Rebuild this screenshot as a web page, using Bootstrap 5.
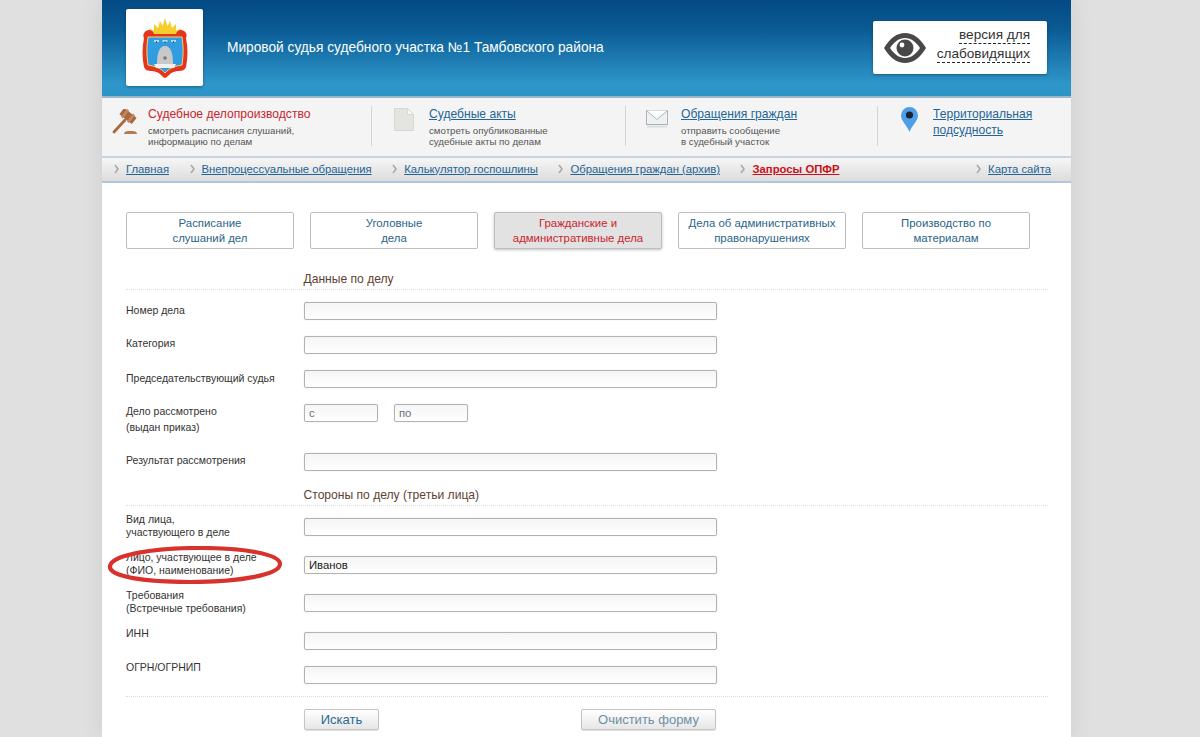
<!DOCTYPE html>
<html lang="ru">
<head>
<meta charset="utf-8">
<title>Мировой судья</title>
<link href="https://cdn.jsdelivr.net/npm/bootstrap@5.3.0/dist/css/bootstrap.min.css" rel="stylesheet">
<style>
html,body{height:737px;overflow:hidden}
body{background:#e0e0e0;font-family:"Liberation Sans",Arial,sans-serif;color:#333}
.shell{width:969px;margin-left:102px;height:737px;background:#fff;box-shadow:0 0 22px rgba(0,0,0,.09)}
.top-band{height:98px;background:linear-gradient(#034a84 0,#0a5a94 30%,#2e97c9 88%,#2c93c6 100%);border-bottom:2px solid #9db7c9;padding:9px 24px 0}
.crest-box{width:77px;height:77px;background:#fff;border-radius:2px;box-shadow:0 1px 3px rgba(0,0,0,.35);flex:none}
.site-title{color:#fff;font-size:13.72px;margin-left:24px;margin-top:-9px}
.eye-box{width:174px;height:53px;background:#fff;border-radius:2px;box-shadow:0 1px 3px rgba(0,0,0,.35);margin-top:12px;padding:0 17px 0 11px;color:#333;font-size:13.6px;line-height:19px}
.eye-txt{padding-bottom:8px}
.eye-txt span{border-bottom:1px dashed #222;display:inline-block;line-height:17px}
.service-strip{height:58px;background:#f4f4f4}
.svc{height:58px;padding-top:8px;position:relative}
.svc::after{content:"";position:absolute;right:0;top:8px;height:40px;width:1px;background:#d4d4d4}
.svc:last-child::after{display:none}
.svc1{width:270px}.svc2{width:254px}.svc3{width:252px}.svc4{width:193px}
.svc-ico{flex:none;height:40px;padding-top:1px}
.svc1 .svc-ico{width:46px;padding-left:9px;padding-top:3px}
.svc2 .svc-ico{width:57px;padding-left:22px}
.svc3 .svc-ico{width:55px;padding-left:20px}
.svc4 .svc-ico{width:55px;padding-left:23px}
.svc-head{font-size:12.1px;line-height:16px;color:#1f6597;text-decoration:underline}
.svc-head.now{color:#c4262e;text-decoration:none}
.svc-sub{font-size:9.7px;line-height:11px;color:#555;margin-top:3px}
.crumbs{height:27px;background:linear-gradient(#f6f6f6,#dcdcdc);border-top:2px solid #c6d4e1;border-bottom:2px solid #b4c7d8;padding:0 20px 1px 12px;font-size:11.3px}
.crumb-item{display:inline-flex;align-items:center}
.crumb-item+.crumb-item{margin-left:20.500px}
.crumb-item.push{margin-left:auto}
.crumb-item svg{margin-right:7px}
.crumb-item span{color:#1f6597;text-decoration:underline}
.crumb-item span.hot{color:#c9101a;font-weight:700}
.tab-row{padding:29px 0 0 24px;gap:16px}
.case-tab{width:168px;height:37px;border:1px solid #bdbdbd;border-radius:2px;font-size:11.4px;line-height:15px;color:#2a6488;text-align:center;padding-top:3px;background:#fff}
.case-tab.sel{background:#e2e2e2;color:#c9252d;box-shadow:0 1px 3px rgba(0,0,0,.25)}
.sheet{padding:0 23px 0 24px;margin-top:23px;position:relative}
.sec-head{padding-left:177.500px;font-size:12.1px;color:#5c4232;line-height:14px;padding-bottom:3px;border-bottom:1px dotted #ddd;margin-bottom:12px}
.fld{display:flex;font-size:10.5px;line-height:19px;color:#333}
.fld-label{width:178px;flex:none;margin-top:-1px}
.fld-label.up1{margin-top:-2px}
.fld-label.lh16{line-height:16px;margin-top:-1px}
.fld-label.tight{line-height:13px;margin-top:-5px}
.fld-input{width:413px;height:18px;border:1px solid #b2b2b2;border-radius:2px;background:linear-gradient(#f5f5f5,#fff);font-size:11.3px;padding:0 4px;min-height:0;box-shadow:0 0 1px rgba(0,0,0,.25);color:#222}
.fld-input.short{width:74px;color:#555}
.fld-input.short::placeholder{color:#6a6f75;opacity:1}
.pair{gap:16px}
.act-row{border-top:1px dotted #ddd;padding:12px 0 0 178px;gap:202px}
.act-btn{height:21px;border:1px solid #c4c4c4;border-radius:2px;background:linear-gradient(#fff,#e6e6e6);font-size:13px;line-height:19px;padding:0;color:#2a6a94;box-shadow:0 1px 1px rgba(0,0,0,.12)}
.act-search{width:75px}
.act-clear{width:135px;color:#6f8fa3}
.mark-ring{position:absolute;left:-19px;top:-10px;pointer-events:none}
.rel-row{position:relative}
.h30{height:30px}.h34{height:34px}.h35{height:35px}.h38{height:38px}.h49{height:49px}
</style>
</head>
<body>
<div class="shell">
  <div class="top-band d-flex align-items-start">
    <div class="crest-box d-flex align-items-center justify-content-center">
      <svg width="46" height="62" viewBox="0 0 46 62">
        <path d="M9 19L7 11l5 3V7l4 4 2-7 2.500 5L23 1l2.500 8L28 4l2 7 4-4v7l5-3-2 8z" fill="#f6cd2c"/>
        <path d="M4 14c3-2 7-1 8 3h22c1-4 5-5 8-3 3 2 3 5 2 7 2 10 2 20 0 29-1 3-4 4-7 4-4 0-7 1-10 4-2 2-3 3-4 3s-2-1-4-3c-3-3-6-4-10-4-3 0-6-1-7-4-2-9-2-19 0-29-1-2-1-5 2-7z" fill="#e5351f"/>
        <path d="M6 20h34c1.500 9 1.500 18 0 28-6 1-13 3-17 8-4-5-11-7-17-8-1.500-10-1.500-19 0-28z" fill="#2f9de0" stroke="#f5d66a"/>
        <path d="M15 47c0-10 2-18 8-18s8 8 8 18z" fill="#c8c8c8"/>
        <path d="M12 47h22l-2 4H14z" fill="#f0f0f0"/>
        <circle cx="23" cy="41" r="1.800" fill="#777"/>
        <path d="M12 24h5M20.500 24h5M29 24h5" stroke="#e6edf2" stroke-width="1.500"/>
        <path d="M14.500 24v2M23 24v2M31.500 24v2" stroke="#555" stroke-width="1"/>
      </svg>
    </div>
    <div class="site-title align-self-center">Мировой судья судебного участка №1 Тамбовского района</div>
    <div class="eye-box ms-auto d-flex align-items-center justify-content-between">
      <svg width="42" height="30" viewBox="0 0 42 30">
        <path d="M0 15C6 5 13 0 21 0s15 5 21 15c-6 10-13 15-21 15S6 25 0 15z" fill="#484848"/>
        <path d="M6 15c4-6 9-10 15-10s11 4 15 10c-4 6-9 10-15 10S10 21 6 15z" fill="#fff"/>
        <circle cx="21" cy="15" r="8.500" fill="#484848"/>
        <circle cx="18" cy="12" r="2.400" fill="#fff"/>
      </svg>
      <div class="eye-txt text-end"><span>версия для</span><br><span>слабовидящих</span></div>
    </div>
  </div>

  <div class="service-strip d-flex">
    <div class="svc svc1 d-flex">
      <div class="svc-ico">
        <svg width="28" height="28" viewBox="0 0 28 28">
          <path d="M3 23L14 11" stroke="#a8693f" stroke-width="2.800" stroke-linecap="round"/>
          <g transform="rotate(38 17 7)">
            <rect x="9" y="3" width="16" height="8" rx="1" fill="#a8693f"/>
            <rect x="12" y="2" width="2.500" height="10" fill="#c08a5e"/>
            <rect x="19.500" y="2" width="2.500" height="10" fill="#c08a5e"/>
          </g>
          <path d="M13 25c0-2 2-3 4-3h5c2 0 4 1 4 3z" fill="#b5794c"/>
        </svg>
      </div>
      <div>
        <div class="svc-head now">Судебное делопроизводство</div>
        <div class="svc-sub">смотреть расписания слушаний,<br>информацию по делам</div>
      </div>
    </div>
    <div class="svc svc2 d-flex">
      <div class="svc-ico">
        <svg width="20" height="23" viewBox="0 0 20 23">
          <path d="M.5.500h13l6 6v16H.5z" fill="#e4e4e1" stroke="#d6d6d4"/>
          <path d="M13.500.500l6 6h-6z" fill="#fafafa" stroke="#d6d6d4"/>
        </svg>
      </div>
      <div>
        <div class="svc-head">Судебные акты</div>
        <div class="svc-sub">смотреть опубликованные<br>судебные акты по делам</div>
      </div>
    </div>
    <div class="svc svc3 d-flex">
      <div class="svc-ico">
        <svg width="22" height="19" viewBox="0 0 22 19">
          <rect x=".5" y=".5" width="21" height="14" fill="#eef1f1" stroke="#a9b7bb"/>
          <path d="M.5.500L11 9.500 21.500.500" fill="#fff" stroke="#a9b7bb"/>
          <path d="M1 16.500h20" stroke="#dedede" stroke-width="2"/>
        </svg>
      </div>
      <div>
        <div class="svc-head">Обращения граждан</div>
        <div class="svc-sub">отправить сообщение<br>в судебный участок</div>
      </div>
    </div>
    <div class="svc svc4 d-flex">
      <div class="svc-ico">
        <svg width="17" height="25" viewBox="0 0 17 25">
          <path d="M8.500 25C6 18 0 14 0 8.500a8.500 8.500 0 0 1 17 0C17 14 11 18 8.500 25z" fill="#4f9fe8"/>
          <circle cx="8.500" cy="8" r="3.600" fill="#1b2530"/>
        </svg>
      </div>
      <div class="svc-head">Территориальная<br>подсудность</div>
    </div>
  </div>

  <div class="crumbs d-flex align-items-center">
    <div class="crumb-item"><svg width="5" height="10" viewBox="0 0 5 10"><path d="M1 1l3 4-3 4" fill="none" stroke="#aaa" stroke-width="1.600"/></svg><span>Главная</span></div>
    <div class="crumb-item"><svg width="5" height="10" viewBox="0 0 5 10"><path d="M1 1l3 4-3 4" fill="none" stroke="#aaa" stroke-width="1.600"/></svg><span>Внепроцессуальные обращения</span></div>
    <div class="crumb-item"><svg width="5" height="10" viewBox="0 0 5 10"><path d="M1 1l3 4-3 4" fill="none" stroke="#aaa" stroke-width="1.600"/></svg><span>Калькулятор госпошлины</span></div>
    <div class="crumb-item"><svg width="5" height="10" viewBox="0 0 5 10"><path d="M1 1l3 4-3 4" fill="none" stroke="#aaa" stroke-width="1.600"/></svg><span>Обращения граждан (архив)</span></div>
    <div class="crumb-item"><svg width="5" height="10" viewBox="0 0 5 10"><path d="M1 1l3 4-3 4" fill="none" stroke="#aaa" stroke-width="1.600"/></svg><span class="hot">Запросы ОПФР</span></div>
    <div class="crumb-item push"><svg width="5" height="10" viewBox="0 0 5 10"><path d="M1 1l3 4-3 4" fill="none" stroke="#aaa" stroke-width="1.600"/></svg><span>Карта сайта</span></div>
  </div>

  <div class="tab-row d-flex">
    <div class="case-tab">Расписание<br>слушаний дел</div>
    <div class="case-tab">Уголовные<br>дела</div>
    <div class="case-tab sel">Гражданские и<br>административные дела</div>
    <div class="case-tab">Дела об административных<br>правонарушениях</div>
    <div class="case-tab">Производство по<br>материалам</div>
  </div>

  <form class="sheet">
    <div class="sec-head">Данные по делу</div>
    <div class="fld h34"><div class="fld-label">Номер дела</div><input class="form-control fld-input" type="text"></div>
    <div class="fld h34"><div class="fld-label up1">Категория</div><input class="form-control fld-input" type="text"></div>
    <div class="fld h34"><div class="fld-label">Председательствующий судья</div><input class="form-control fld-input" type="text"></div>
    <div class="fld h49"><div class="fld-label lh16">Дело рассмотрено<br>(выдан приказ)</div><div class="d-flex pair"><input class="form-control fld-input short" type="text" placeholder="с"><input class="form-control fld-input short" type="text" placeholder="по"></div></div>
    <div class="fld h35"><div class="fld-label up1">Результат рассмотрения</div><input class="form-control fld-input" type="text"></div>
    <div class="sec-head">Стороны по делу (третьи лица)</div>
    <div class="fld h38"><div class="fld-label tight">Вид лица,<br>участвующего в деле</div><input class="form-control fld-input" type="text"></div>
    <div class="fld h38 rel-row"><div class="fld-label tight">Лицо, участвующее в деле<br>(ФИО, наименование)</div><input class="form-control fld-input" type="text" value="Иванов">
      <svg class="mark-ring" width="176" height="38" viewBox="0 0 176 38"><path d="M3 20C5 9 45 2 92 2c45 0 81 6 81 16 0 11-42 18-90 18C40 36 1 31 3 20z" fill="none" stroke="#d8322c" stroke-width="4.200"/></svg>
    </div>
    <div class="fld h38"><div class="fld-label tight">Требования<br>(Встречные требования)</div><input class="form-control fld-input" type="text"></div>
    <div class="fld h34"><div class="fld-label tight">ИНН</div><input class="form-control fld-input" type="text"></div>
    <div class="fld h30"><div class="fld-label tight">ОГРН/ОГРНИП</div><input class="form-control fld-input" type="text"></div>
    <div class="act-row d-flex">
      <button type="button" class="btn act-btn act-search">Искать</button>
      <button type="button" class="btn act-btn act-clear">Очистить форму</button>
    </div>
  </form>
</div>
</body>
</html>
